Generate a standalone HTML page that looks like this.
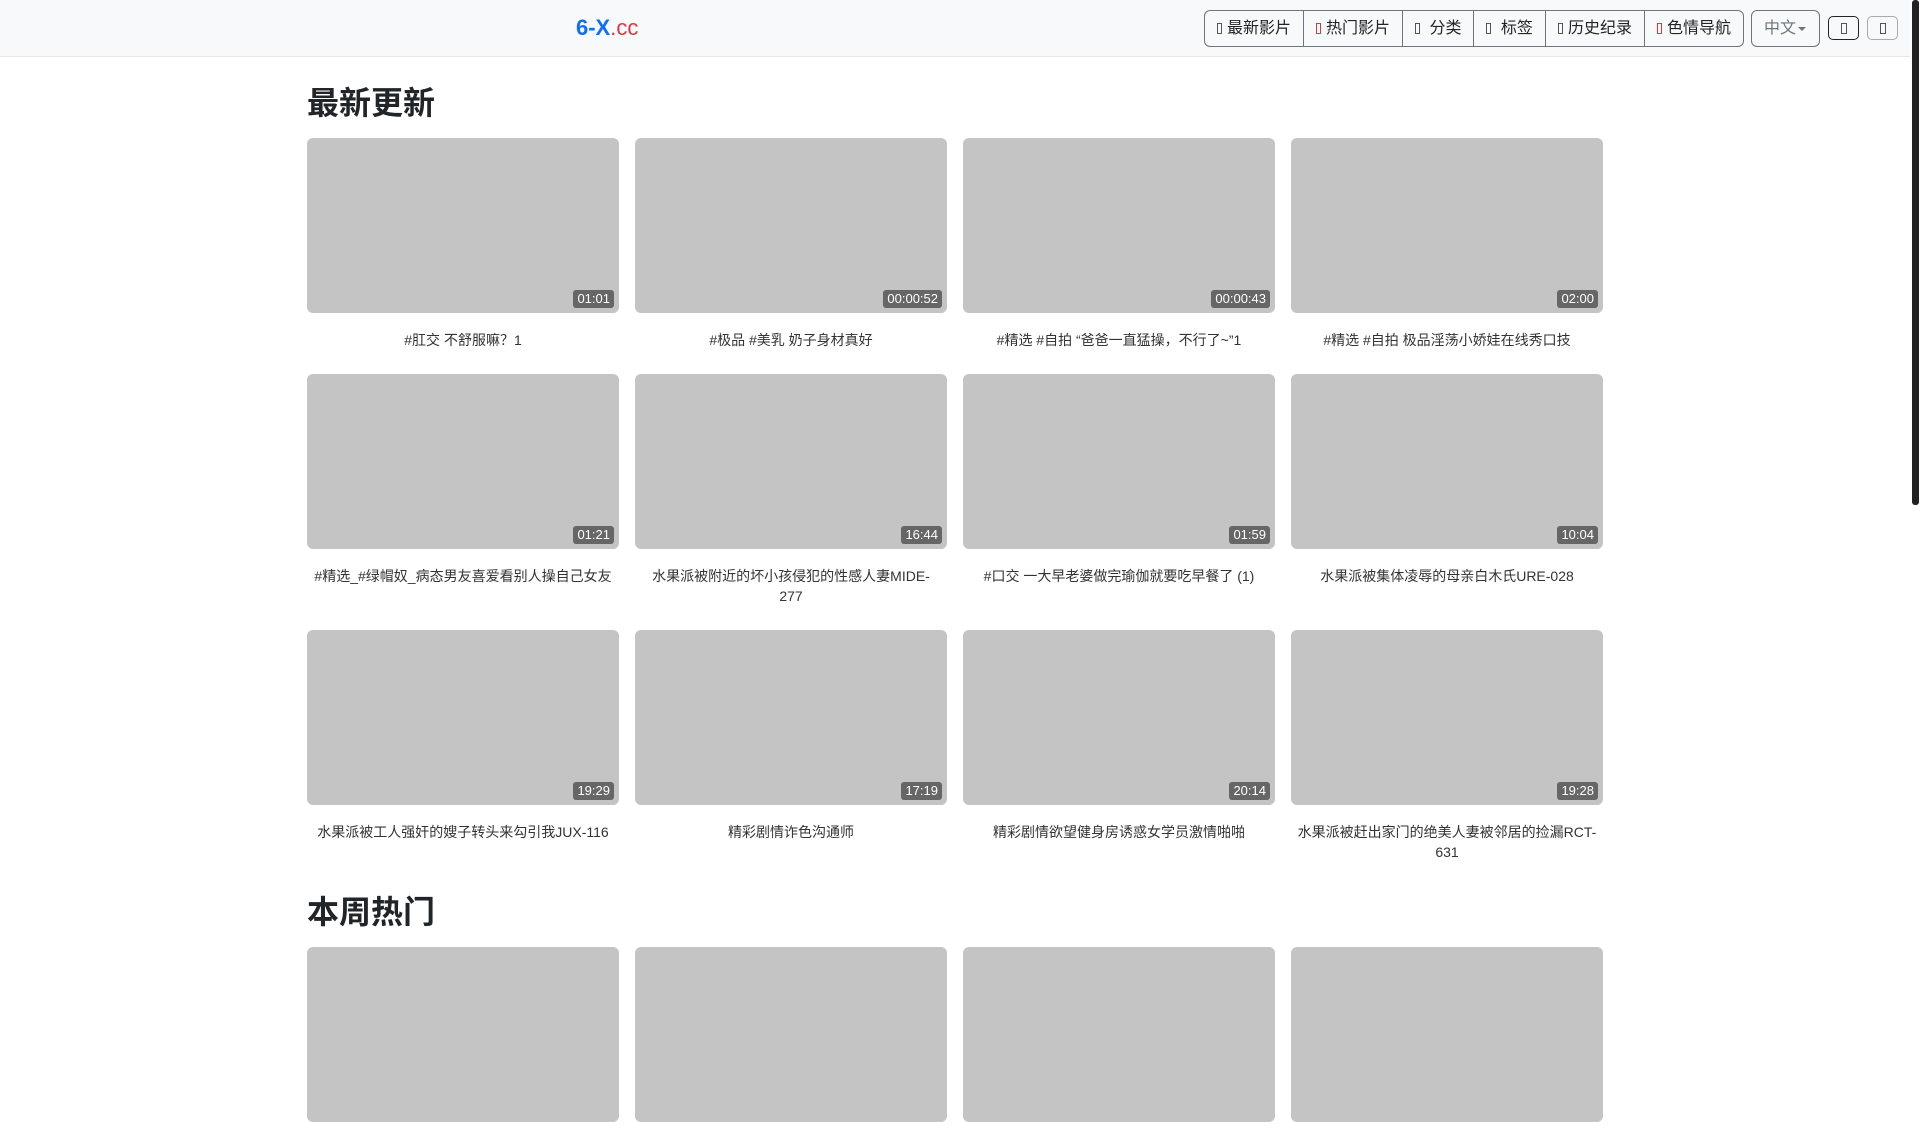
<!DOCTYPE html>
<html><head><meta charset="utf-8"><style>
*{box-sizing:border-box;margin:0;padding:0}
html,body{width:1920px;height:1080px;overflow:hidden;background:#fff;font-family:"Liberation Sans","Noto Sans CJK SC",sans-serif;color:#212529}
.sb{position:absolute;right:0;top:0;width:10px;height:1080px;background:#fff}
.sb i{position:absolute;right:1px;top:0;width:7px;height:505px;background:#222;border-radius:3px}
header{position:absolute;left:0;top:0;width:1910px;height:57px;background:#f8f9fa;border-bottom:1px solid #e6e6e6}
.logo{position:absolute;left:576px;top:14px;font-size:22px;line-height:28px}
.logo b{color:#0d6efd}.logo span{color:#dc3545}
.grp{position:absolute;left:1204px;top:10px;height:37px;display:flex;border:1px solid #6c757d;border-radius:6px;overflow:hidden}
.grp div{height:35px;line-height:35px;font-size:16px;padding:0 12px;border-left:1px solid #6c757d;white-space:nowrap;font-family:"Liberation Sans","Noto Sans CJK SC",sans-serif}
.grp div:first-child{border-left:none}
.ic{display:inline-block;width:5px;height:11px;border:1px solid #555;margin-right:5px;vertical-align:-1px}
.ic.r{border-color:#dc3545}
.lang{position:absolute;left:1751px;top:10px;width:69px;height:37px;border:1px solid #6c757d;border-radius:6px;color:#6c757d;font-size:16px;line-height:35px;padding-left:12px}
.lang:after{content:"";position:absolute;right:13px;top:16px;border:4px solid transparent;border-top-color:#6c757d;border-bottom:none}
.sm{position:absolute;top:16px;width:31px;height:24px;border:1px solid #212529;border-radius:5px}
.sm:after{content:"";position:absolute;left:12px;top:6px;width:4px;height:9px;border:1px solid #555}
.sm.b{border-color:#aaa}
main{position:absolute;left:307px;top:0;width:1296px}
h2{font-size:32px;font-weight:bold;line-height:38px;height:38px;margin:84px 0 16px}
h2.s2{margin-top:7px}
.row{display:grid;grid-template-columns:repeat(4,312px);column-gap:16px}
.card{margin-bottom:24px}
.th{position:relative;height:175px;background:#c4c4c4;border-radius:6px}
.d{position:absolute;right:5px;bottom:5px;background:#666;color:#fff;font-size:13px;line-height:18px;padding:0 4px;border-radius:3px}
.t{padding:17px 6px 0;font-size:14px;line-height:20px;text-align:center;color:#333}
</style></head><body>
<header>
<div class="logo"><b>6-X</b><span>.cc</span></div>
<div class="grp">
<div><span class="ic"></span>最新影片</div>
<div><span class="ic r"></span>热门影片</div>
<div><span class="ic"></span> 分类</div>
<div><span class="ic"></span> 标签</div>
<div><span class="ic"></span>历史纪录</div>
<div><span class="ic r"></span>色情导航</div>
</div>
<div class="lang">中文</div>
<div class="sm" style="left:1828px"></div>
<div class="sm b" style="left:1867px"></div>
</header>
<main>
<h2>最新更新</h2>
<div class="row">
<div class="card"><div class="th"><span class="d">01:01</span></div><div class="t">#肛交 不舒服嘛？1</div></div>
<div class="card"><div class="th"><span class="d">00:00:52</span></div><div class="t">#极品 #美乳 奶子身材真好</div></div>
<div class="card"><div class="th"><span class="d">00:00:43</span></div><div class="t">#精选 #自拍 “爸爸一直猛操，不行了~”1</div></div>
<div class="card"><div class="th"><span class="d">02:00</span></div><div class="t">#精选 #自拍 极品淫荡小娇娃在线秀口技</div></div>
<div class="card"><div class="th"><span class="d">01:21</span></div><div class="t">#精选_#绿帽奴_病态男友喜爱看别人操自己女友</div></div>
<div class="card"><div class="th"><span class="d">16:44</span></div><div class="t">水果派被附近的坏小孩侵犯的性感人妻MIDE-277</div></div>
<div class="card"><div class="th"><span class="d">01:59</span></div><div class="t">#口交 一大早老婆做完瑜伽就要吃早餐了 (1)</div></div>
<div class="card"><div class="th"><span class="d">10:04</span></div><div class="t">水果派被集体凌辱的母亲白木氏URE-028</div></div>
<div class="card"><div class="th"><span class="d">19:29</span></div><div class="t">水果派被工人强奸的嫂子转头来勾引我JUX-116</div></div>
<div class="card"><div class="th"><span class="d">17:19</span></div><div class="t">精彩剧情诈色沟通师</div></div>
<div class="card"><div class="th"><span class="d">20:14</span></div><div class="t">精彩剧情欲望健身房诱惑女学员激情啪啪</div></div>
<div class="card"><div class="th"><span class="d">19:28</span></div><div class="t">水果派被赶出家门的绝美人妻被邻居的捡漏RCT-631</div></div>
</div>
<h2 class="s2">本周热门</h2>
<div class="row">
<div class="card"><div class="th"></div></div>
<div class="card"><div class="th"></div></div>
<div class="card"><div class="th"></div></div>
<div class="card"><div class="th"></div></div>
</div>
</main>
<div class="sb"><i></i></div>
</body></html>
